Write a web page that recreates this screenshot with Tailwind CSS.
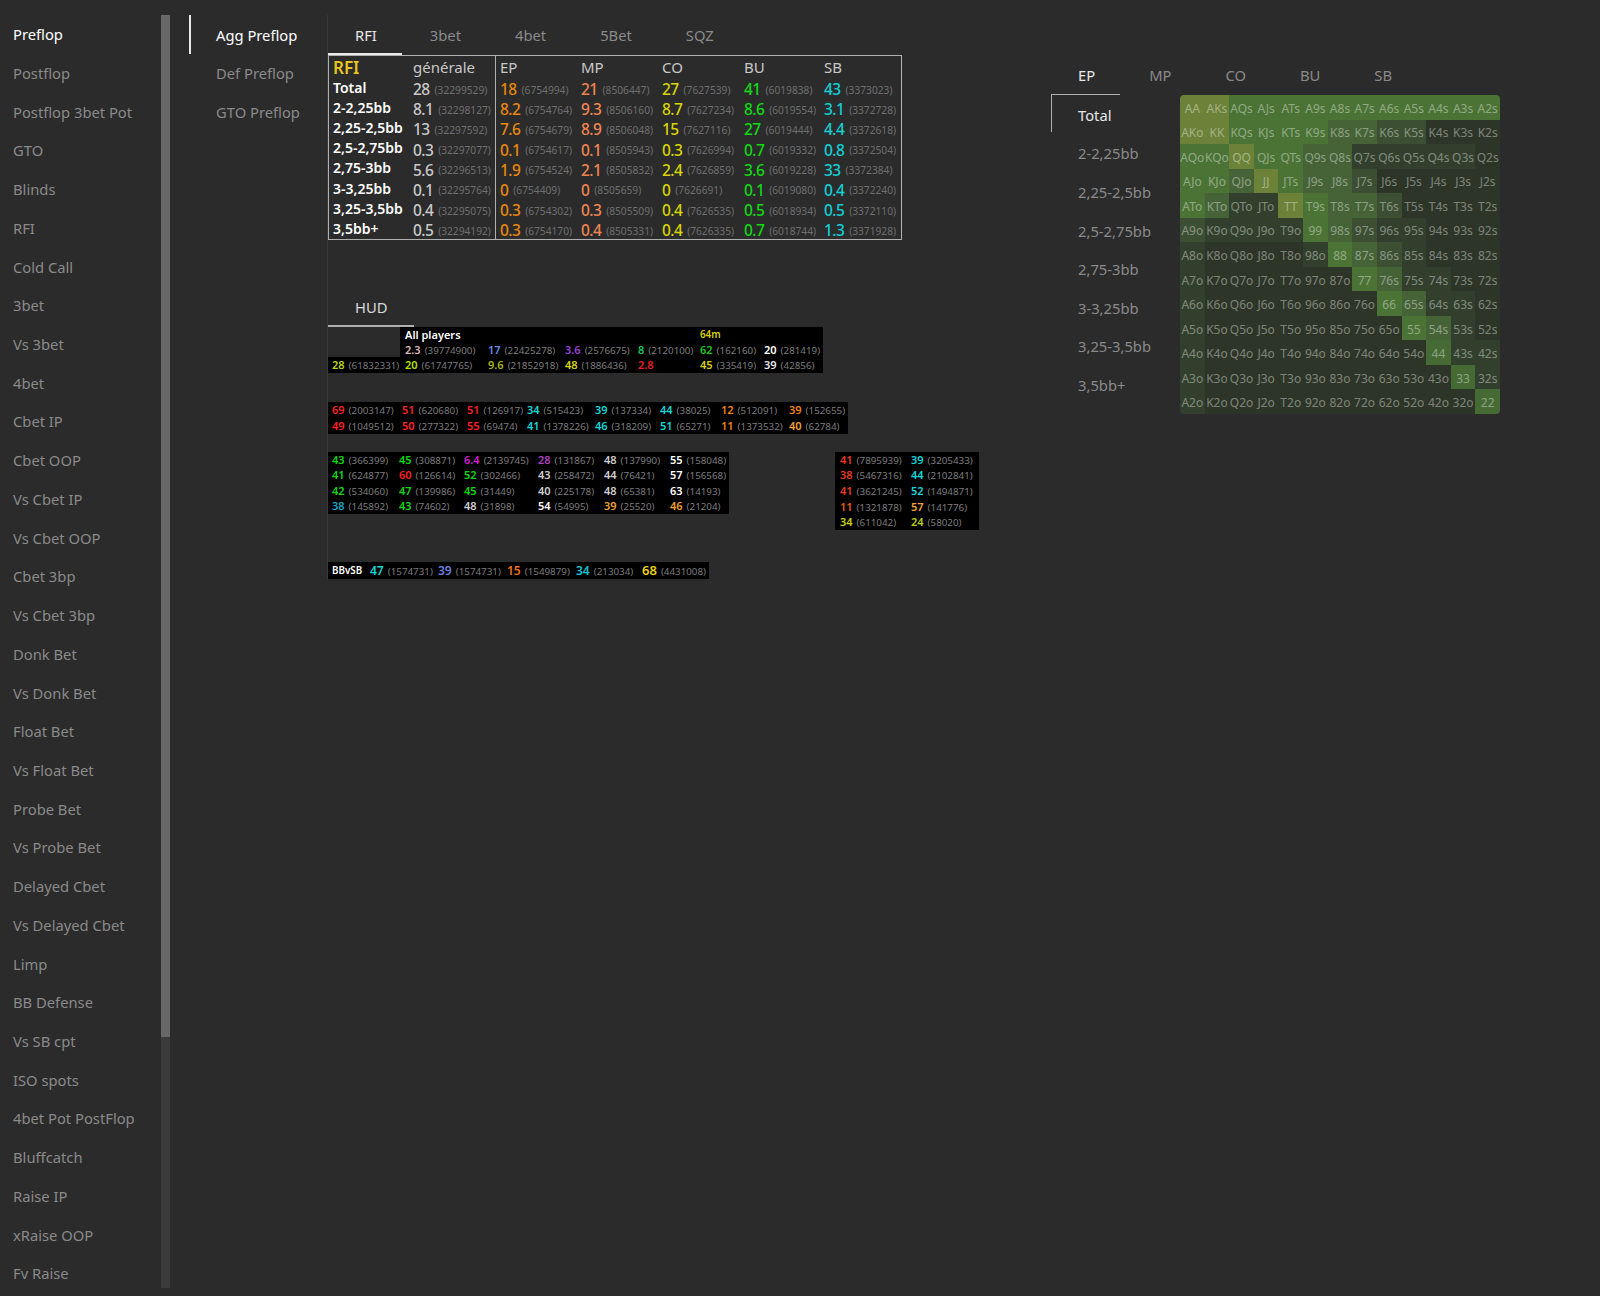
<!DOCTYPE html>
<html lang="en">

<head>
    <meta charset="UTF-8">
    <title>Preflop stats</title>
    <script src="https://cdn.jsdelivr.net/npm/@tailwindcss/browser@4"></script>
</head>

<body class="bg-[#2b2b2b] text-[#8a8a8a] [font-family:'Noto_Sans',sans-serif] text-[14.75px]">
    <div class="flex h-[1296px] overflow-hidden pt-[15px]">

        <!-- left menu -->
        <ul id="menu" class="w-[161px] h-[1281px] overflow-hidden shrink-0"></ul>
        <div class="w-[9px] h-[1273px] bg-[#3b3b3b] shrink-0">
            <div class="h-[1022px] bg-[#686868]"></div>
        </div>

        <!-- sub menu -->
        <ul class="w-[138px] ml-[19px] shrink-0">
            <li class="h-[38.7px] flex items-center pl-[25px] pt-[1px] border-l-2 border-[#e8e8e8] text-white">Agg Preflop</li>
            <li class="h-[38.7px] flex items-center pl-[27px] pt-[1px]">Def Preflop</li>
            <li class="h-[38.7px] flex items-center pl-[27px] pt-[1px]">GTO Preflop</li>
        </ul>

        <!-- main -->
        <div class="w-[724px] shrink-0 self-start border-l border-[#383838]">
            <div class="flex gap-[1px] h-[40px]">
                <div class="h-[40px] pl-[27px] pr-[25px] pt-[9px] border-b-2 border-[#e8e8e8] text-[#e8e8e8]">RFI</div>
                <div class="pl-[27px] pr-[26px] pt-[9px]">3bet</div>
                <div class="pl-[27px] pr-[26px] pt-[9px]">4bet</div>
                <div class="pl-[27px] pr-[26px] pt-[9px]">5Bet</div>
                <div class="pl-[27px] pr-[26px] pt-[9px]">SQZ</div>
            </div>

            <div id="rfi" class="w-[574px] h-[185px] border border-[#b0b0b0] grid grid-cols-[84px_83px_85px_81px_82px_80px_1fr] grid-rows-[23px_repeat(8,20.1px)] items-center leading-none"></div>

            <div class="mt-[48px] h-[39px] w-[86px] border-b-2 border-[#b0b0b0] pl-[27px] pt-[8px] text-[#d8d8d8]">HUD</div>

            <div id="hud1" class="w-[495px] h-[46px] bg-black grid grid-cols-[72px_88px_77px_73px_62px_64px_1fr] grid-rows-[15px_15px_16px] items-center leading-none text-[9.8px]"></div>
            <div id="hud2" class="w-[520px] h-[32px] mt-[29px] bg-black grid grid-cols-[70px_65px_60px_68px_65px_61px_68px_1fr] grid-rows-2 items-center pl-[4px] leading-none text-[9.8px]"></div>

            <div class="flex items-start mt-[18px]">
                <div id="hud3" class="w-[401px] h-[62px] bg-black grid grid-cols-[67px_65px_74px_66px_66px_1fr] grid-rows-4 items-center pl-[4px] leading-none text-[9.8px]"></div>
                <div id="hud5" class="w-[144px] h-[78px] ml-[106px] bg-black grid grid-cols-[71px_1fr] grid-rows-5 items-center pl-[5px] leading-none text-[9.8px]"></div>
            </div>

            <div class="w-[381px] h-[17px] mt-[32px] bg-black flex items-center pl-[4px] leading-none text-[9.8px]" id="hud4"></div>
        </div>

        <!-- right panel -->
        <div class="shrink-0 pt-[42px]">
            <div class="flex gap-[1px] h-[37px] pt-[7px]">
                <div class="pl-[27px] pr-[26px] text-[#e8e8e8]">EP</div>
                <div class="pl-[27px] pr-[26px]">MP</div>
                <div class="pl-[27px] pr-[26px]">CO</div>
                <div class="pl-[27px] pr-[26px]">BU</div>
                <div class="pl-[27px] pr-[26px]">SB</div>
            </div>
            <div class="flex">
                <div class="w-[129px] shrink-0">
                    <div class="w-[69px] h-[38px] border-t border-l border-[#b0b0b0] pl-[26px] pt-[4px] flex items-center text-[#e8e8e8] whitespace-nowrap">Total</div>
                    <div class="h-[38.65px] mt-[2px] pl-[27px] flex items-center">2-2,25bb</div>
                    <div class="h-[38.65px] pl-[27px] flex items-center">2,25-2,5bb</div>
                    <div class="h-[38.65px] pl-[27px] flex items-center">2,5-2,75bb</div>
                    <div class="h-[38.65px] pl-[27px] flex items-center">2,75-3bb</div>
                    <div class="h-[38.65px] pl-[27px] flex items-center">3-3,25bb</div>
                    <div class="h-[38.65px] pl-[27px] flex items-center">3,25-3,5bb</div>
                    <div class="h-[38.65px] pl-[27px] flex items-center">3,5bb+</div>
                </div>
                <div id="range" class="mt-[1px] w-[320px] h-[319px] rounded-[4px] overflow-hidden grid grid-cols-13 grid-rows-13 text-[12px] text-white/40 leading-none"></div>
            </div>
        </div>
    </div>

    <script>
        const menu = ['Preflop', 'Postflop', 'Postflop 3bet Pot', 'GTO', 'Blinds', 'RFI', 'Cold Call', '3bet', 'Vs 3bet', '4bet', 'Cbet IP', 'Cbet OOP', 'Vs Cbet IP', 'Vs Cbet OOP', 'Cbet 3bp', 'Vs Cbet 3bp', 'Donk Bet', 'Vs Donk Bet', 'Float Bet', 'Vs Float Bet', 'Probe Bet', 'Vs Probe Bet', 'Delayed Cbet', 'Vs Delayed Cbet', 'Limp', 'BB Defense', 'Vs SB cpt', 'ISO spots', '4bet Pot PostFlop', 'Bluffcatch', 'Raise IP', 'xRaise OOP', 'Fv Raise'];
        document.getElementById('menu').innerHTML = menu.map((m, i) =>
            `<li class="h-[38.72px] flex items-center pl-[13px] ${i == 0 ? 'text-white' : ''}">${m}</li>`).join('');

        // [value, hands, colour] -> one stat cell
        function stat(v, n, color, size = 'text-[11px]') {
            return `<div class="whitespace-nowrap"><span class="font-semibold mr-[4px] ${size} ${color}">${v}</span><span class="text-[#7d7d7d]">${n ? '(' + n + ')' : ''}</span></div>`;
        }

        // RFI table
        const rfiColors = ['text-[#c8c8c8]', 'text-[#e8870e]', 'text-[#f08552]', 'text-[#d9d400]', 'text-[#12d912]', 'text-[#12cfd6]'];
        const rfi = [
            ['Total', [28, 32299529], [18, 6754994], [21, 8506447], [27, 7627539], [41, 6019838], [43, 3373023]],
            ['2-2,25bb', [8.1, 32298127], [8.2, 6754764], [9.3, 8506160], [8.7, 7627234], [8.6, 6019554], [3.1, 3372728]],
            ['2,25-2,5bb', [13, 32297592], [7.6, 6754679], [8.9, 8506048], [15, 7627116], [27, 6019444], [4.4, 3372618]],
            ['2,5-2,75bb', [0.3, 32297077], [0.1, 6754617], [0.1, 8505943], [0.3, 7626994], [0.7, 6019332], [0.8, 3372504]],
            ['2,75-3bb', [5.6, 32296513], [1.9, 6754524], [2.1, 8505832], [2.4, 7626859], [3.6, 6019228], [33, 3372384]],
            ['3-3,25bb', [0.1, 32295764], [0, 6754409], [0, 8505659], [0, 7626691], [0.1, 6019080], [0.4, 3372240]],
            ['3,25-3,5bb', [0.4, 32295075], [0.3, 6754302], [0.3, 8505509], [0.4, 7626535], [0.5, 6018934], [0.5, 3372110]],
            ['3,5bb+', [0.5, 32294192], [0.3, 6754170], [0.4, 8505331], [0.4, 7626335], [0.7, 6018744], [1.3, 3371928]],
        ];
        const bodyCell = (c, i) => `<div class="h-full flex items-center pt-[2px] whitespace-nowrap ${i == 0 ? 'border-r border-[#b0b0b0]' : ''} ${i == 1 ? 'pl-[4px]' : ''}"><span class="text-[15.5px] font-medium tracking-[-0.6px] mr-[5px] ${rfiColors[i]}">${c[0]}</span><span class="text-[10.2px] text-[#6f6f6f]">(${c[1]})</span></div>`;
        const headCell = (t, i) => `<div class="h-full flex items-center text-[15px] text-[#c8c8c8] ${i == 0 ? 'border-r border-[#b0b0b0]' : ''} ${i == 1 ? 'pl-[4px]' : ''}">${t}</div>`;
        document.getElementById('rfi').innerHTML =
            `<div class="pl-[4px] text-[17px] font-semibold text-[#e8c41e]">RFI</div>` +
            ['générale', 'EP', 'MP', 'CO', 'BU', 'SB'].map(headCell).join('') +
            rfi.map(r => `<div class="pl-[4px] pb-[2px] text-[14px] font-semibold text-white whitespace-nowrap">${r[0]}</div>` + r.slice(1).map(bodyCell).join('')).join('');

        // HUD blocks
        const R = 'text-[#ff2020]', C = 'text-[#10d8d8]', O = 'text-[#f08010]', G = 'text-[#10d810]', W = 'text-white', L = 'text-[#d0d0d0]', A = 'text-[#f0a030]';
        document.getElementById('hud1').innerHTML =
            `<div class="row-span-2 h-full bg-[#2b2b2b]"></div>` +
            `<div class="pl-[5px] font-semibold text-[11px] text-white">All players</div><div></div><div></div><div></div>` +
            `<div class="font-semibold text-[#d8d000]">64m</div><div></div>` +
            [[2.3, 39774900, 'text-[#d9b8b8]'], [17, 22425278, 'text-[#6a8ae8]'], [3.6, 2576675, 'text-[#9b40d8]'], [8, 2120100, 'text-[#17c95a]'], [62, 162160, 'text-[#1fc51f]'], [20, 281419, W]]
                .map((c, i) => `<div class="${i == 0 ? 'pl-[5px]' : ''}">${stat(...c)}</div>`).join('') +
            [[28, 61832331, 'text-[#b8d81a]'], [20, 61747765, 'text-[#b8e000]'], [9.6, 21852918, 'text-[#a8b818]'], [48, 1886436, 'text-[#d8d818]'], [2.8, '', 'text-[#e82020]'], [45, 335419, 'text-[#d8d010]'], [39, 42856, 'text-[#e8e8f0]']]
                .map((c, i) => `<div class="${i == 0 ? 'pl-[4px]' : i == 1 ? 'pl-[5px]' : ''}">${stat(...c)}</div>`).join('');

        document.getElementById('hud2').innerHTML = [
            [69, 2003147, R], [51, 620680, R], [51, 126917, R], [34, 515423, C], [39, 137334, C], [44, 38025, C], [12, 512091, O], [39, 152655, O],
            [49, 1049512, R], [50, 277322, R], [55, 69474, R], [41, 1378226, C], [46, 318209, C], [51, 65271, C], [11, 1373532, O], [40, 62784, A],
        ].map(c => stat(...c)).join('');

        document.getElementById('hud3').innerHTML = [
            [43, 366399, G], [45, 308871, G], [6.4, 2139745, 'text-[#d020d0]'], [28, 131867, 'text-[#b040c0]'], [48, 137990, L], [55, 158048, W],
            [41, 624877, G], [60, 126614, R], [52, 302466, G], [43, 258472, L], [44, 76421, L], [57, 156568, W],
            [42, 534060, G], [47, 139986, G], [45, 31449, G], [40, 225178, L], [48, 65381, L], [63, 14193, W],
            [38, 145892, 'text-[#10a8c8]'], [43, 74602, G], [48, 31898, L], [54, 54995, W], [39, 25520, A], [46, 21204, A],
        ].map(c => stat(...c)).join('');

        const S = 'text-[#e83a20]';
        document.getElementById('hud5').innerHTML = [
            [41, 7895939, S], [39, 3205433, C], [38, 5467316, S], [44, 2102841, C], [41, 3621245, S], [52, 1494871, C],
            [11, 1321878, 'text-[#e85a10]'], [57, 141776, A], [34, 611042, 'text-[#c8d010]'], [24, 58020, 'text-[#b8d010]'],
        ].map(c => stat(...c)).join('');

        document.getElementById('hud4').innerHTML = `<div class="w-[38px] font-semibold text-white">BBvSB</div>` + [
            [47, 1574731, C, 'w-[68px]', 'text-[12px]'], [39, 1574731, 'text-[#6a80e0]', 'w-[69px]', 'text-[12px]'], [15, 1549879, 'text-[#f07010]', 'w-[69px]', 'text-[12px]'], [34, 213034, 'text-[#10c0d0]', 'w-[66px]', 'text-[12px]'], [68, 4431008, 'text-[#e8d010]', '', 'text-[13px]'],
        ].map(c => `<div class="${c[3]}">${stat(c[0], c[1], c[2], c[4])}</div>`).join('');

        // range grid: y yellow, g green, f paler green, a/b/c lighter to darker, d darkest
        const hands = 'AKQJT98765432'.split('');
        const heat = [
            'yyggggggggggg',
            'yyggggaabbddd',
            'ggyggaacccccd',
            'ggaygaabddddd',
            'gaccygaabdddd',
            'bccccgabccddd',
            'cddddcgabcddd',
            'cddddddgaccdd',
            'cdddddddgaccd',
            'cddddddddgacd',
            'cdddddddddfcc',
            'cddddddddddfc',
            'cdddddddddddf',
        ];
        const bg = { y: 'bg-[#6b8238]', g: 'bg-[#4b7335]', f: 'bg-[#456a34]', a: 'bg-[#466338]', b: 'bg-[#3c4f33]', c: 'bg-[#323f2c]', d: 'bg-[#2c3527]' };
        let cells = '';
        hands.forEach((a, r) => hands.forEach((b, c) => {
            const name = r == c ? a + b : r < c ? a + b + 's' : b + a + 'o';
            cells += `<div class="flex items-center justify-center pt-[3px] ${bg[heat[r][c]]}">${name}</div>`;
        }));
        document.getElementById('range').innerHTML = cells;
    </script>
</body>

</html>
